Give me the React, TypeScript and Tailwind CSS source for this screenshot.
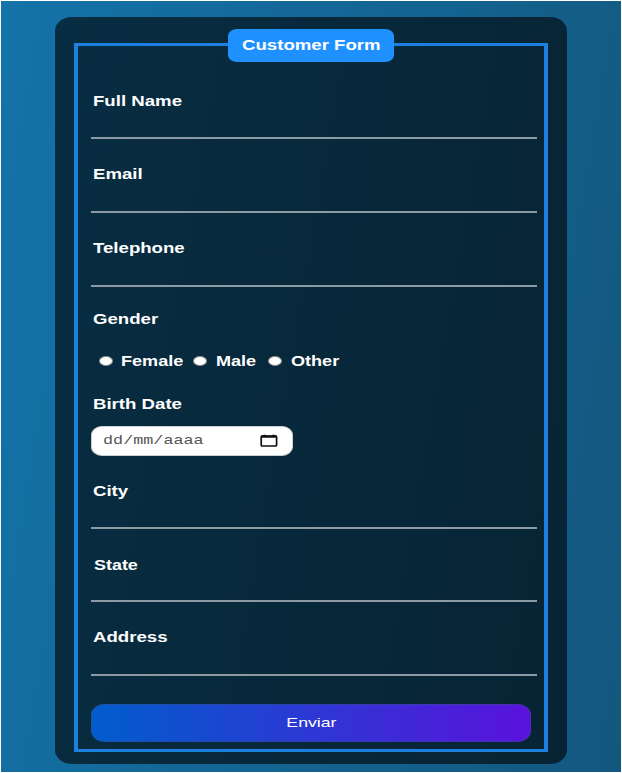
import type { ReactNode } from "react";

const sans = "font-['Liberation_Sans',Arial,sans-serif]";

function Wide({ children, scale = "scale-x-[1.33]" }: { children: ReactNode; scale?: string }) {
  return (
    <span className={`block w-fit origin-left whitespace-nowrap text-[14px] leading-5 font-bold text-white ${scale}`}>
      {children}
    </span>
  );
}

function Field({ label, className, indent = "pl-[2px]", scale }: { label: string; className: string; indent?: string; scale?: string }) {
  return (
    <div className={`flex w-[446px] flex-col border-b-2 border-[#8b9aa3] ${className}`}>
      <label className={`w-[90px] ${indent}`}>
        <Wide scale={scale}>{label}</Wide>
      </label>
    </div>
  );
}

function Radio({ label, className, gap }: { label: string; className: string; gap: string }) {
  return (
    <label className={`flex items-center ${className}`}>
      <span className={`h-[10px] w-[14px] shrink-0 rounded-[50%] border border-[#87898b] bg-white ${gap}`} />
      <Wide scale="scale-x-[1.29]">{label}</Wide>
    </label>
  );
}

export default function App() {
  return (
    <main className={`h-[773px] w-[622px] overflow-hidden bg-white p-px ${sans}`}>
      <div className="h-[771px] w-[620px] bg-[linear-gradient(100deg,#1473a9,#13577e)] pt-[16px] pl-[54px]">
        <form className="h-[747px] w-[512px] rounded-[17px/14px] bg-black/60 pt-[26px] pl-[19px]">
          <section className="relative h-[709px] w-[474px] border-x-4 border-y-[3px] border-[#1b80de] pl-[13px]">
            <h1 className="absolute -top-[17px] left-[150px] flex h-[33px] w-[166px] items-center rounded-[9px/7px] bg-[#1e90ff] pb-[2px] pl-[14px]">
              <Wide scale="scale-x-[1.33]">Customer Form</Wide>
            </h1>
            <Field label="Full Name" className="mt-[45px] h-[48px]" />
            <Field label="Email" className="mt-[25px] h-[49px]" />
            <Field label="Telephone" className="mt-[25px] h-[49px]" />
            <div className="mt-[22px] h-[42px] pl-[2px]">
              <Wide>Gender</Wide>
            </div>
            <div className="flex h-[20px] pl-[8px]">
              <Radio label="Female" className="w-[94px]" gap="mr-[8px]" />
              <Radio label="Male" className="w-[75px]" gap="mr-[9px]" />
              <Radio label="Other" className="w-[75px]" gap="mr-[9px]" />
            </div>
            <div className="mt-[23px] h-[32px] pl-[2px]">
              <Wide>Birth Date</Wide>
            </div>
            <div className="flex h-[30px] w-[202px] items-center justify-between rounded-[11px/9px] border border-[#c8d0d4] bg-white pr-[14px] pl-[11px]">
              <span className="block w-[80px] origin-left scale-x-[1.29] font-['Liberation_Mono','Courier_New',monospace] text-[13px] leading-4 whitespace-nowrap text-[#555]">
                dd/mm/aaaa
              </span>
              <svg width="18" height="14" viewBox="0 0 18 14" fill="none">
                <rect x="1.2" y="2" width="15.4" height="10" rx="1" stroke="#111" strokeWidth="1.7" />
                <path d="M1 2.6h16M4.5 .8v2.5M13.5 .8v2.5" stroke="#111" strokeWidth="2.2" />
              </svg>
            </div>
            <Field label="City" className="mt-[25px] h-[48px]" />
            <Field label="State" className="mt-[26px] h-[47px]" indent="pl-[3px]" scale="scale-x-[1.28]" />
            <Field label="Address" className="mt-[25px] h-[49px]" />
            <button
              type="button"
              className="mt-[28px] flex h-[38px] w-[440px] items-center justify-center rounded-[14px/11px] border border-[#334d86]/50 bg-[linear-gradient(90deg,#005dcc,#5a12dc)] bg-origin-border text-[13px] text-white"
            >
              <span className="block scale-x-[1.36] leading-5">Enviar</span>
            </button>
          </section>
        </form>
      </div>
    </main>
  );
}
